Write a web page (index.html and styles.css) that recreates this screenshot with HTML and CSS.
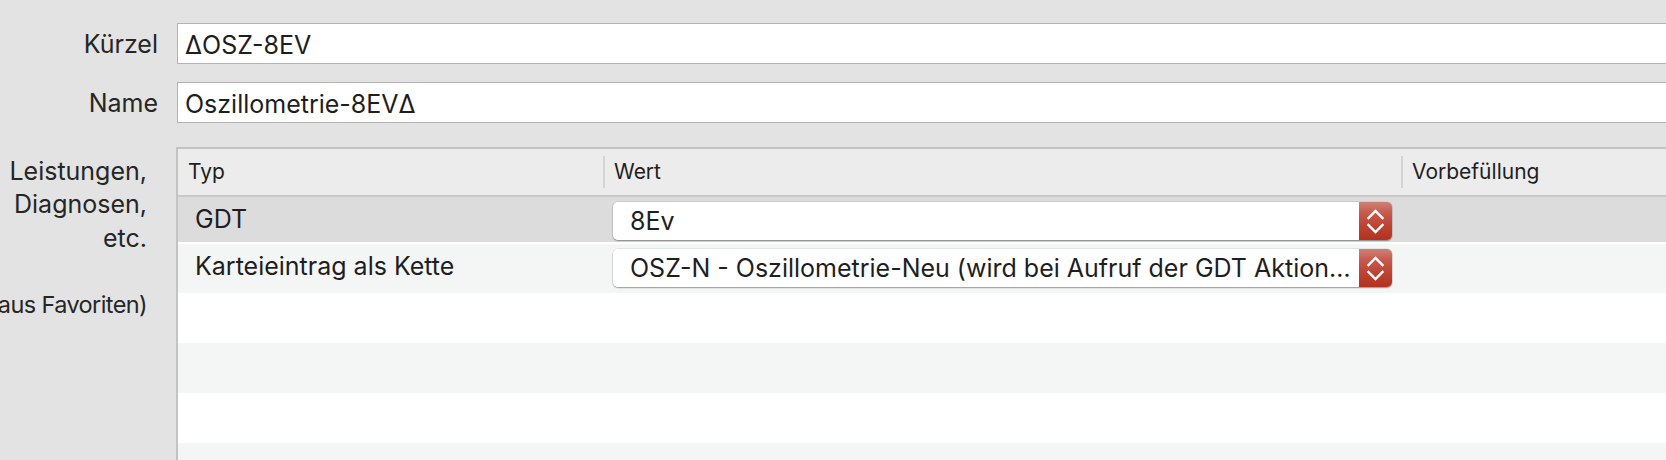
FILE: index.html
```html
<!DOCTYPE html>
<html lang="de">
<head>
<meta charset="utf-8">
<title>Aktion</title>
<link rel="stylesheet" href="styles.css">
</head>
<body>
<div class="form">
  <div class="field">
    <div class="lbl">Kürzel</div>
    <div class="input">ΔOSZ-8EV</div>
  </div>
  <div class="field">
    <div class="lbl">Name</div>
    <div class="input">Oszillometrie-8EVΔ</div>
  </div>
  <div class="field field-table">
    <div class="lbl-multi">
      <div>Leistungen,</div>
      <div>Diagnosen,</div>
      <div>etc.</div>
      <div class="blank"></div>
      <div class="tight">(aus Favoriten)</div>
    </div>
    <div class="table">
      <div class="thead">
        <div class="th">Typ</div>
        <div class="th th-div">Wert</div>
        <div class="th th-div">Vorbefüllung</div>
      </div>
      <div class="tr tr-sel">
        <div class="td">GDT</div>
        <div class="td td-sel">
          <div class="select">
            <div class="sel-body">8Ev</div>
            <div class="stepper"><svg width="33" height="38" viewBox="0 0 33 38"><polyline points="9.5,16 16.5,9 23.5,16" /><polyline points="9.5,23 16.5,30 23.5,23" /></svg></div>
          </div>
        </div>
        <div class="td"></div>
      </div>
      <div class="tr tr-alt tr-second">
        <div class="td">Karteieintrag als Kette</div>
        <div class="td td-sel">
          <div class="select">
            <div class="sel-body">OSZ-N - Oszillometrie-Neu (wird bei Aufruf der GDT Aktion…</div>
            <div class="stepper"><svg width="33" height="38" viewBox="0 0 33 38"><polyline points="9.5,16 16.5,9 23.5,16" /><polyline points="9.5,23 16.5,30 23.5,23" /></svg></div>
          </div>
        </div>
        <div class="td"></div>
      </div>
      <div class="tr"></div>
      <div class="tr tr-alt"></div>
      <div class="tr"></div>
      <div class="tr tr-alt"></div>
    </div>
  </div>
</div>
</body>
</html>
```

FILE: styles.css
```css
html, body {
  margin: 0;
  padding: 0;
  background: #e3e3e3;
  overflow: hidden;
}

body {
  width: 1666px;
  height: 460px;
  font-family: "Inter", "Noto Sans", sans-serif;
  color: #262626;
}

.form {
  padding-top: 23px;
  display: flex;
  flex-direction: column;
}

.field {
  display: flex;
  align-items: stretch;
  gap: 19px;
  margin-bottom: 17px;
}

.lbl {
  width: 158px;
  flex: none;
  text-align: right;
  font-size: 25px;
  line-height: 41px;
  white-space: nowrap;
  padding-top: 1px;
}

.input {
  flex: 1;
  height: 41px;
  box-sizing: border-box;
  margin-right: -6px;
  background: #ffffff;
  border: 1px solid #b3b3b3;
  padding-left: 7px;
  font-size: 25px;
  line-height: 40px;
  color: #1e1e1e;
  padding-top: 1px;
}

.field-table {
  margin-top: 6px;
  gap: 29px;
  margin-bottom: 0;
}

.lbl-multi {
  width: 147px;
  flex: none;
  display: flex;
  flex-direction: column;
  align-items: flex-end;
  font-size: 25px;
  line-height: 33.3px;
  white-space: nowrap;
  padding-top: 8px;
}

.lbl-multi .blank {
  height: 33.3px;
}

.lbl-multi .tight {
  font-size: 23.5px;
  letter-spacing: -0.6px;
}

.table {
  flex: 1;
  margin-right: -10px;
  border-top: 2px solid #c3c3c3;
  border-left: 2px solid #c3c3c3;
  background: #ffffff;
  height: 312px;
}

.thead {
  display: grid;
  grid-template-columns: 426px 798px 1fr;
  height: 46px;
  background: #ececec;
  border-bottom: 2px solid #c8c8c8;
}

.th {
  position: relative;
  font-size: 21px;
  line-height: 46px;
  padding-left: 10px;
  color: #1e1e1e;
}

.th-div::before {
  content: "";
  position: absolute;
  left: -1px;
  top: 7px;
  bottom: 7px;
  width: 2px;
  background: #d4d4d4;
}

.tr {
  display: grid;
  grid-template-columns: 426px 798px 1fr;
  height: 50px;
  background: #ffffff;
}

.tr-alt {
  background: #f4f5f5;
}

.tr-sel {
  height: 45px;
  background: #dcdcdc;
  margin-bottom: 2px;
}

.tr-second {
  height: 49px;
}

.td {
  font-size: 25px;
  line-height: 45px;
  padding-left: 17px;
  color: #1e1e1e;
  white-space: nowrap;
}

.tr-second .td {
  line-height: 44px;
}

.td-sel {
  padding: 5px 10px 0 9px;
}

.select {
  display: flex;
  height: 38px;
  border-radius: 5px;
  box-shadow: 0 1px 1.5px rgba(0, 0, 0, 0.35), 0 0 0 0.5px rgba(0, 0, 0, 0.12);
}

.sel-body {
  flex: 1;
  min-width: 0;
  background: #ffffff;
  border-radius: 5px 0 0 5px;
  padding-left: 17px;
  font-size: 25px;
  line-height: 38px;
  overflow: hidden;
  white-space: nowrap;
  color: #1e1e1e;
}

.stepper {
  width: 33px;
  flex: none;
  border-radius: 0 5px 5px 0;
  background: linear-gradient(#cf8177 0%, #c6584c 30%, #bd4535 60%, #b2321f 100%);
  display: flex;
}

.stepper polyline {
  fill: none;
  stroke: #ffffff;
  stroke-width: 2.4;
  stroke-linecap: square;
  stroke-linejoin: miter;
}
```
